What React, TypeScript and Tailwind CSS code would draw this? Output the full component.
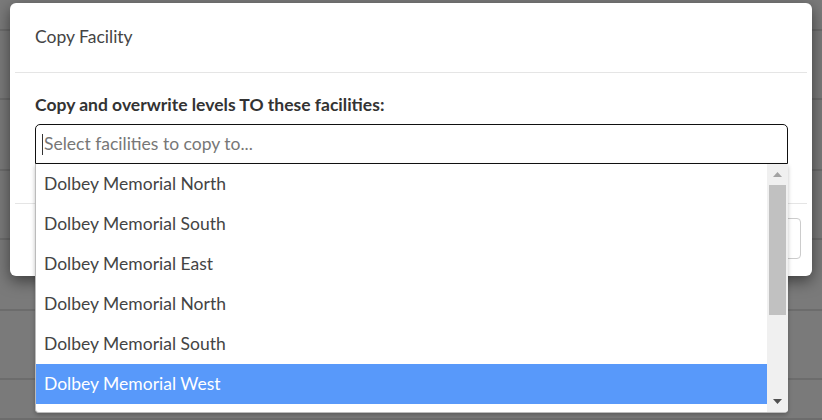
const FACILITIES = [
    'Dolbey Memorial North',
    'Dolbey Memorial South',
    'Dolbey Memorial East',
    'Dolbey Memorial North',
    'Dolbey Memorial South',
    'Dolbey Memorial West',
    ''
]

const SELECTED_INDEX = 5

// filas de la tabla que queda detrás del modal
const BACKGROUND_ROWS = ['h-[31px]', 'h-[69px]', 'h-[71px]', 'h-[69px]', 'h-[71px]', 'h-[69px]', 'h-[40px]']

export default function App() {
    return (
        <div
            className="relative w-[822px] h-[420px] overflow-hidden bg-[#7a7a7a]"
            style={{ fontFamily: 'Lato, "Open Sans", sans-serif' }}
        >
            {/* Tabla de fondo */}
            <div className="flex flex-col">
                {BACKGROUND_ROWS.map((h, i) => (
                    <div key={i} className={`${h} border-b-2 border-[#6c6c6c]`} />
                ))}
            </div>

            {/* Modal */}
            <div className="absolute inset-0 pt-[3px] pl-[10px] pr-[10px]">
                <div className="w-[802px] bg-white rounded-md shadow-[0_5px_15px_rgba(0,0,0,0.5)]">
                    {/* Header */}
                    <div className="h-[70px] flex items-center px-[25px] mx-[5px] border-b border-[#e5e5e5]">
                        <h3 className="text-[17.5px] text-[#444] -ml-[5px]">Copy Facility</h3>
                    </div>

                    {/* Body */}
                    <div className="px-[25px] pt-[22px] pb-[39px]">
                        <label className="block text-[17.5px] font-bold text-[#333] leading-[20px] mb-[9px]">
                            Copy and overwrite levels TO these facilities:
                        </label>
                        <div className="relative w-[753px]">
                            <div className="h-[40px] border border-[#111] rounded-t-[5px] flex items-center pl-[6px]">
                                <span className="w-px h-[21px] bg-[#333]" />
                                <span className="text-[17.5px] text-[#777] ml-[1px]">Select facilities to copy to...</span>
                            </div>

                            {/* Lista desplegable */}
                            <div className="absolute left-0 right-0 top-full z-10 h-[249px] flex bg-white border-l border-b border-[#bbb] rounded-b-[4px] overflow-hidden shadow-[0_2px_4px_rgba(0,0,0,0.25)]">
                                <ul className="flex-1 overflow-hidden">
                                    {FACILITIES.map((name, i) => (
                                        <li
                                            key={i}
                                            className={`h-[40px] flex items-center pl-[8px] text-[17.5px] ${
                                                i === SELECTED_INDEX ? 'bg-[#5899fa] text-white' : 'text-[#444]'
                                            }`}
                                        >
                                            {name}
                                        </li>
                                    ))}
                                </ul>
                                {/* Barra de scroll */}
                                <div className="w-[21px] bg-[#f0f0f0] flex flex-col items-center">
                                    <div className="h-[21px] w-full flex items-center justify-center">
                                        <svg width="9" height="5" viewBox="0 0 9 5">
                                            <polygon points="4.5,0 9,5 0,5" fill="#a3a3a3" />
                                        </svg>
                                    </div>
                                    <div className="w-[17px] h-[130px] bg-[#c1c1c1]" />
                                    <div className="flex-1" />
                                    <div className="h-[21px] w-full flex items-center justify-center">
                                        <svg width="9" height="5" viewBox="0 0 9 5">
                                            <polygon points="0,0 9,0 4.5,5" fill="#505050" />
                                        </svg>
                                    </div>
                                </div>
                            </div>
                        </div>
                    </div>

                    {/* Footer */}
                    <div className="mx-[5px] border-t border-[#e5e5e5] pt-[14px] pb-[17px] pr-[6px] flex justify-end">
                        <button className="h-[41px] px-[20px] border border-[#ccc] rounded-[4px] text-[15px] text-[#333]">
                            Copy
                        </button>
                    </div>
                </div>
            </div>
        </div>
    )
}
